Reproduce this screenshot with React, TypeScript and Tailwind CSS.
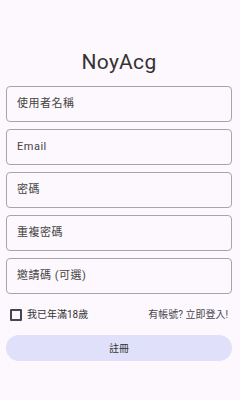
import React, { useState } from 'react';

const fields = ['使用者名稱', 'Email', '密碼', '重複密碼', '邀請碼 (可選)'];

export default function App() {
    const [adult, setAdult] = useState(false);

    return (
        <div className="w-[240px] h-[400px] bg-[#fdf8fd] flex flex-col pl-[6px] pr-[8px] pt-[48px] font-['Roboto','Noto_Sans_CJK_TC',sans-serif] text-[#1c1b1f]">
            <h1 className="text-center text-[21px] leading-[28px] text-[#333] mb-[10px] tracking-[0.3px]">NoyAcg</h1>

            <div className="flex flex-col gap-[7px]">
                {fields.map((label) => (
                    <div
                        key={label}
                        className="h-[36px] border border-[#a6a6a8] rounded-[4px] flex items-center px-[10px] text-[11px] tracking-[0.5px] text-[#444]"
                    >
                        {label}
                    </div>
                ))}
            </div>

            <div className="flex items-center justify-between mt-[13px] pl-[4px] pr-[4px]">
                <label className="flex items-center gap-[5px] text-[10px] text-[#333]">
                    <span
                        onClick={() => setAdult(!adult)}
                        className="w-[12px] h-[12px] border-2 border-[#49454f] rounded-[1px] bg-transparent"
                    />
                    我已年滿18歲
                </label>
                <span className="text-[10px] text-[#49454f]">有帳號? 立即登入!</span>
            </div>

            <button className="mt-[13px] h-[26px] rounded-full bg-[#e1e0fa] text-[10px] text-[#333] flex items-center justify-center">
                註冊
            </button>
        </div>
    );
}
